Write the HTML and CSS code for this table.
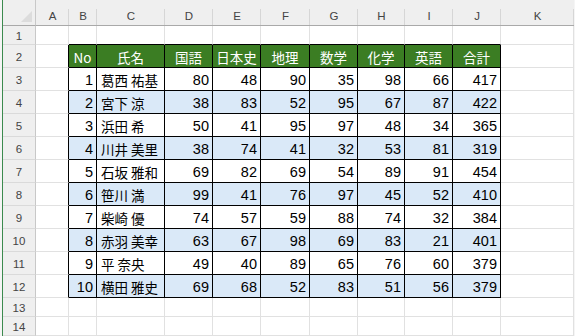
FILE: index.html
```html
<!DOCTYPE html>
<html lang="ja">
<head>
<meta charset="utf-8">
<title>Sheet</title>
<link rel="stylesheet" href="styles.css">
</head>
<body>
<div class="frame">
  <div class="sheet">
    <!-- column header row -->
    <div class="corner"><span class="tri"></span></div>
    <div class="ch">A</div><div class="ch">B</div><div class="ch">C</div><div class="ch">D</div><div class="ch">E</div><div class="ch">F</div><div class="ch">G</div><div class="ch">H</div><div class="ch">I</div><div class="ch">J</div><div class="ch">K</div>

    <!-- row 1 -->
    <div class="rh">1</div>
    <div class="c"></div><div class="c top"></div><div class="c top"></div><div class="c top"></div><div class="c top"></div><div class="c top"></div><div class="c top"></div><div class="c top"></div><div class="c top"></div><div class="c top"></div><div class="c"></div>

    <!-- row 2 header -->
    <div class="rh">2</div>
    <div class="c edge"></div>
    <div class="c t th">No</div><div class="c t th">氏名</div><div class="c t th">国語</div><div class="c t th">日本史</div><div class="c t th">地理</div><div class="c t th">数学</div><div class="c t th">化学</div><div class="c t th">英語</div><div class="c t th">合計</div>
    <div class="c"></div>

    <div class="rh">3</div><div class="c edge"></div>
    <div class="c t n">1</div><div class="c t nm">葛西 祐基</div><div class="c t n">80</div><div class="c t n">48</div><div class="c t n">90</div><div class="c t n">35</div><div class="c t n">98</div><div class="c t n">66</div><div class="c t n">417</div><div class="c"></div>

    <div class="rh">4</div><div class="c edge"></div>
    <div class="c t n alt">2</div><div class="c t nm alt">宮下 涼</div><div class="c t n alt">38</div><div class="c t n alt">83</div><div class="c t n alt">52</div><div class="c t n alt">95</div><div class="c t n alt">67</div><div class="c t n alt">87</div><div class="c t n alt">422</div><div class="c"></div>

    <div class="rh">5</div><div class="c edge"></div>
    <div class="c t n">3</div><div class="c t nm">浜田 希</div><div class="c t n">50</div><div class="c t n">41</div><div class="c t n">95</div><div class="c t n">97</div><div class="c t n">48</div><div class="c t n">34</div><div class="c t n">365</div><div class="c"></div>

    <div class="rh">6</div><div class="c edge"></div>
    <div class="c t n alt">4</div><div class="c t nm alt">川井 美里</div><div class="c t n alt">38</div><div class="c t n alt">74</div><div class="c t n alt">41</div><div class="c t n alt">32</div><div class="c t n alt">53</div><div class="c t n alt">81</div><div class="c t n alt">319</div><div class="c"></div>

    <div class="rh">7</div><div class="c edge"></div>
    <div class="c t n">5</div><div class="c t nm">石坂 雅和</div><div class="c t n">69</div><div class="c t n">82</div><div class="c t n">69</div><div class="c t n">54</div><div class="c t n">89</div><div class="c t n">91</div><div class="c t n">454</div><div class="c"></div>

    <div class="rh">8</div><div class="c edge"></div>
    <div class="c t n alt">6</div><div class="c t nm alt">笹川 満</div><div class="c t n alt">99</div><div class="c t n alt">41</div><div class="c t n alt">76</div><div class="c t n alt">97</div><div class="c t n alt">45</div><div class="c t n alt">52</div><div class="c t n alt">410</div><div class="c"></div>

    <div class="rh">9</div><div class="c edge"></div>
    <div class="c t n">7</div><div class="c t nm">柴崎 優</div><div class="c t n">74</div><div class="c t n">57</div><div class="c t n">59</div><div class="c t n">88</div><div class="c t n">74</div><div class="c t n">32</div><div class="c t n">384</div><div class="c"></div>

    <div class="rh">10</div><div class="c edge"></div>
    <div class="c t n alt">8</div><div class="c t nm alt">赤羽 美幸</div><div class="c t n alt">63</div><div class="c t n alt">67</div><div class="c t n alt">98</div><div class="c t n alt">69</div><div class="c t n alt">83</div><div class="c t n alt">21</div><div class="c t n alt">401</div><div class="c"></div>

    <div class="rh">11</div><div class="c edge"></div>
    <div class="c t n">9</div><div class="c t nm">平 奈央</div><div class="c t n">49</div><div class="c t n">40</div><div class="c t n">89</div><div class="c t n">65</div><div class="c t n">76</div><div class="c t n">60</div><div class="c t n">379</div><div class="c"></div>

    <div class="rh">12</div><div class="c edge"></div>
    <div class="c t n alt">10</div><div class="c t nm alt">横田 雅史</div><div class="c t n alt">69</div><div class="c t n alt">68</div><div class="c t n alt">52</div><div class="c t n alt">83</div><div class="c t n alt">51</div><div class="c t n alt">56</div><div class="c t n alt">379</div><div class="c"></div>

    <div class="rh">13</div>
    <div class="c"></div><div class="c"></div><div class="c"></div><div class="c"></div><div class="c"></div><div class="c"></div><div class="c"></div><div class="c"></div><div class="c"></div><div class="c"></div><div class="c"></div>

    <div class="rh">14</div>
    <div class="c"></div><div class="c"></div><div class="c"></div><div class="c"></div><div class="c"></div><div class="c"></div><div class="c"></div><div class="c"></div><div class="c"></div><div class="c"></div><div class="c"></div>
  </div>
</div>
</body>
</html>
```
FILE: styles.css
```css
* { box-sizing: border-box; }
html, body { margin: 0; padding: 0; background: #ffffff; }
body { width: 575px; height: 336px; overflow: hidden; }

.frame {
  display: flex;
  height: 336px;
  padding-left: 2px;
  background: #f5f5f5;
}

.sheet {
  border-left: 1px solid #3c8a4e;
  background: #ffffff;
  display: grid;
  grid-template-columns: 33px 33px 28px 68px 48px 48px 49px 48px 47px 48px 48px 73px;
  grid-template-rows: 26px 19px repeat(11, 23px) 19px 19px;
  font-family: "Liberation Sans", "Noto Sans CJK JP", sans-serif;
  font-size: 14px;
  color: #000;
}

.corner {
  background: #efefef;
  border-right: 1px solid #c8c8c8;
  border-bottom: 1px solid #a9a9a9;
  position: relative;
}
.tri {
  position: absolute;
  right: 3px;
  bottom: 3px;
  width: 0;
  height: 0;
  border-left: 11px solid transparent;
  border-bottom: 11px solid #dcdcdc;
}

.ch {
  background: #efefef;
  border-bottom: 1px solid #a9a9a9;
  background-image: linear-gradient(#d6d6d6, #d6d6d6);
  background-size: 1px 16px;
  background-position: right bottom;
  background-repeat: no-repeat;
  display: flex;
  align-items: center;
  justify-content: center;
  padding-top: 6px;
  font-family: "Liberation Sans", sans-serif;
  font-size: 11.5px;
  color: #444;
}

.rh {
  background: #efefef;
  border-right: 1px solid #c8c8c8;
  border-bottom: 1px solid #dadada;
  display: flex;
  align-items: center;
  justify-content: center;
  padding-top: 2px;
  font-family: "Liberation Sans", sans-serif;
  font-size: 11.5px;
  color: #444;
}

.c {
  border-right: 1px solid #e1e1e1;
  border-bottom: 1px solid #e1e1e1;
  display: flex;
  align-items: center;
  padding-top: 1px;
  white-space: nowrap;
}

.c.top { border-bottom-color: #000; }
.c.edge { border-right-color: #000; }

.t {
  border-right-color: #000;
  border-bottom-color: #000;
}

.th {
  background: #3b7d23;
  color: #ffffff;
  justify-content: center;
  font-family: "Noto Sans CJK JP", "Liberation Sans", sans-serif;
  font-size: 13.5px;
}
.th:first-child { font-family: "Liberation Sans", sans-serif; }

.n {
  justify-content: flex-end;
  padding-right: 3px;
  font-size: 14.5px;
}

.nm {
  justify-content: flex-start;
  padding-left: 4px;
  font-family: "Noto Sans CJK JP", sans-serif;
  font-size: 13.5px;
  font-weight: 400;
}

.alt { background: #dae9f8; }
```
